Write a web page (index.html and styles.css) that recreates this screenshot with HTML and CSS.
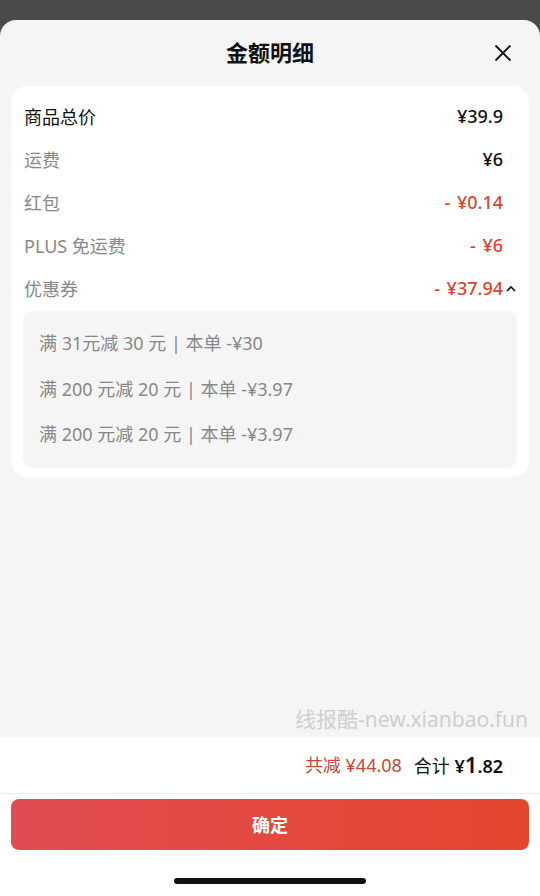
FILE: index.html
```html
<!DOCTYPE html>
<html lang="zh-CN">
<head>
  <meta charset="UTF-8">
  <meta name="viewport" content="width=device-width, initial-scale=1.0">
  <title>金额明细</title>
  <link rel="stylesheet" href="styles.css">
</head>
<body>
  <div class="sheet">
    <div class="sheet-header">
      <h1>金额明细</h1>
      <button class="close" aria-label="关闭">
        <svg width="18" height="18" viewBox="0 0 18 18"><path d="M1.5 1.5 L16.5 16.5 M16.5 1.5 L1.5 16.5" stroke="#111" stroke-width="1.8" fill="none"/></svg>
      </button>
    </div>

    <div class="sheet-body">
      <div class="card">
        <div class="row">
          <span class="label strong">商品总价</span>
          <span class="value">¥39.9</span>
        </div>
        <div class="row">
          <span class="label">运费</span>
          <span class="value">¥6</span>
        </div>
        <div class="row">
          <span class="label">红包</span>
          <span class="value minus">- ¥0.14</span>
        </div>
        <div class="row">
          <span class="label">PLUS 免运费</span>
          <span class="value minus">- ¥6</span>
        </div>
        <div class="row">
          <span class="label">优惠券</span>
          <span class="value minus">- ¥37.94<svg class="chevron" width="12" height="8" viewBox="0 0 12 8"><path d="M2 6 L6 2 L10 6" stroke="#111" stroke-width="1.6" fill="none"/></svg></span>
        </div>
        <div class="coupons">
          <p>满 31元减 30 元 | 本单 -¥30</p>
          <p>满 200 元减 20 元 | 本单 -¥3.97</p>
          <p>满 200 元减 20 元 | 本单 -¥3.97</p>
        </div>
      </div>
      <div class="watermark">线报酷-new.xianbao.fun</div>
    </div>

    <div class="footer">
      <div class="summary">
        <span class="saved">共减 ¥44.08</span>
        <span class="total">合计 <b>¥<big>1</big>.82</b></span>
      </div>
      <div class="actions">
        <button class="confirm">确定</button>
        <div class="home-bar"></div>
      </div>
    </div>
  </div>
</body>
</html>
```

FILE: styles.css
```css
* {
  box-sizing: border-box;
}
body {
  margin: 0;
  height: 896px;
  background: #4a4a4a;
  padding-top: 20px;
  font-family: "Noto Sans", "Noto Sans CJK SC", sans-serif;
  overflow: hidden;
}
.sheet {
  height: 876px;
  background: #f5f5f5;
  border-radius: 16px 16px 0 0;
  display: flex;
  flex-direction: column;
  overflow: hidden;
}
.sheet-header {
  height: 66px;
  display: flex;
  justify-content: center;
  align-items: center;
  padding-bottom: 4px;
  position: relative;
}
.sheet-header h1 {
  margin: 0;
  font-size: 22px;
  font-weight: 600;
  color: #111;
}
.close {
  position: absolute;
  right: 28px;
  top: 24px;
  background: none;
  border: none;
  padding: 0;
  width: 18px;
  height: 18px;
}
.sheet-body {
  flex: 1;
  position: relative;
  padding: 0 11px;
}
.card {
  background: #fff;
  border-radius: 16px;
  padding: 10px 12px 9px;
}
.row {
  height: 43px;
  display: flex;
  justify-content: space-between;
  align-items: center;
  padding: 0 14px 3px 1px;
  font-size: 18px;
}
.label {
  color: #888;
}
.label.strong {
  color: #111;
}
.value {
  font-family: "Noto Sans", sans-serif;
  font-weight: 500;
  color: #111;
  position: relative;
  word-spacing: 2px;
}
.value.minus {
  color: #d84430;
}
.chevron {
  position: absolute;
  right: -14px;
  top: 9px;
}
.coupons {
  background: #f5f5f5;
  border-radius: 10px;
  padding: 10px 16px;
}
.coupons p {
  margin: 0;
  height: 45.5px;
  line-height: 45px;
  font-size: 18px;
  color: #888;
}
.watermark {
  position: absolute;
  right: 12px;
  bottom: 4px;
  font-size: 21px;
  color: #cfcfcf;
}
.footer {
  background: #fff;
  height: 159px;
}
.summary {
  height: 57px;
  display: flex;
  justify-content: flex-end;
  align-items: center;
  padding: 0 37px 3px 0;
  border-bottom: 1px solid #eee;
  font-size: 18px;
}
.saved {
  color: #c8473a;
  margin-right: 12px;
}
.total {
  color: #111;
}
.total b {
  font-weight: 600;
}
.total big {
  font-size: 22px;
}
.actions {
  padding: 5px 11px 0;
}
.confirm {
  width: 100%;
  height: 51px;
  border: none;
  border-radius: 8px;
  background: linear-gradient(90deg, #e24c52, #e4462e);
  color: #fff;
  font-size: 18px;
  font-weight: 600;
  font-family: "Noto Sans CJK SC", sans-serif;
  padding-bottom: 2px;
}
.home-bar {
  width: 192px;
  height: 6px;
  border-radius: 3px;
  background: #111;
  margin: 28px auto 0;
}
```
